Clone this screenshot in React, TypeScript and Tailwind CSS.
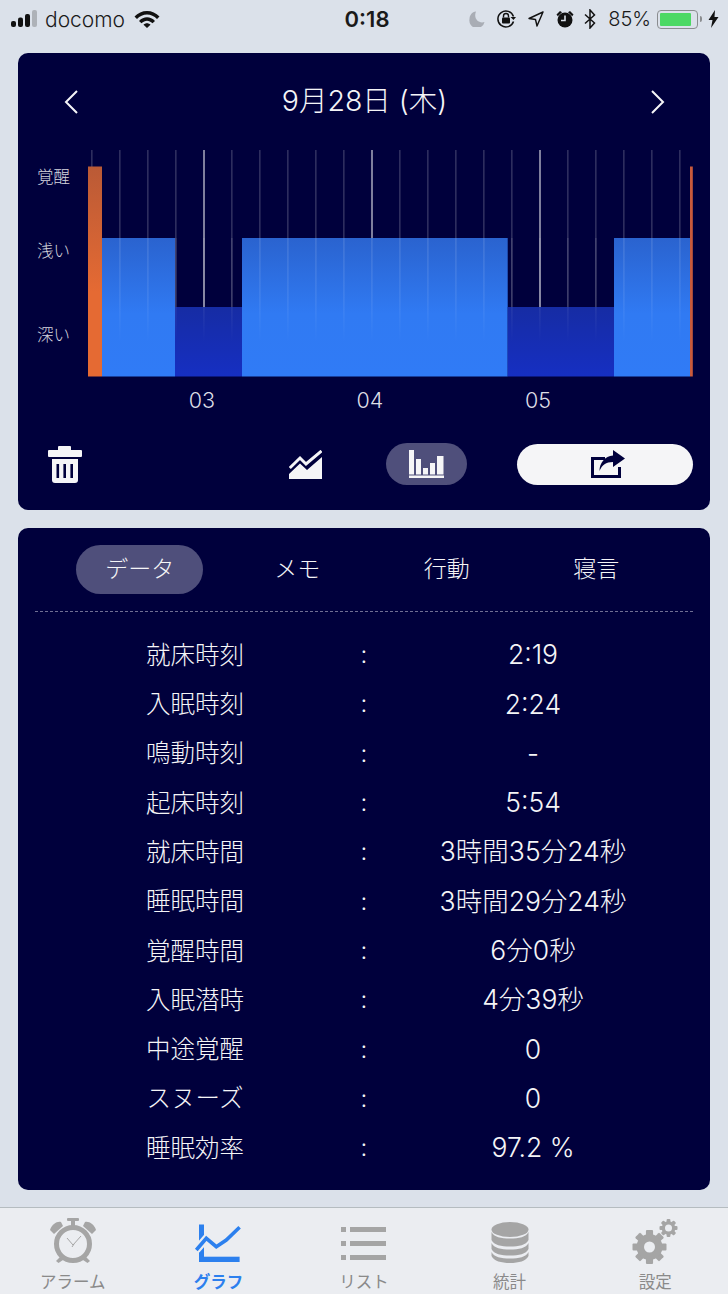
const rows = [
  ["就床時刻", "2:19"],
  ["入眠時刻", "2:24"],
  ["鳴動時刻", "-"],
  ["起床時刻", "5:54"],
  ["就床時間", "3時間35分24秒"],
  ["睡眠時間", "3時間29分24秒"],
  ["覚醒時間", "6分0秒"],
  ["入眠潜時", "4分39秒"],
  ["中途覚醒", "0"],
  ["スヌーズ", "0"],
  ["睡眠効率", "97.2 %"],
];

const gridLines = Array.from({ length: 22 }, (_, i) => i);

function SleepChart() {
  return (
    <svg width="606" height="228" viewBox="0 0 606 228" className="block">
      <defs>
        <linearGradient id="fade" x1="0" y1="88" x2="0" y2="192" gradientUnits="userSpaceOnUse">
          <stop offset="0" stopColor="#fff" stopOpacity="0.13" />
          <stop offset="0.6" stopColor="#fff" stopOpacity="0.09" />
          <stop offset="1" stopColor="#fff" stopOpacity="0" />
        </linearGradient>
        <linearGradient id="light" x1="0" y1="0" x2="0" y2="1">
          <stop offset="0" stopColor="#2a63cf" />
          <stop offset="0.55" stopColor="#307af3" />
          <stop offset="1" stopColor="#307bf6" />
        </linearGradient>
        <linearGradient id="deep" x1="0" y1="0" x2="0" y2="1">
          <stop offset="0" stopColor="#162ca4" />
          <stop offset="1" stopColor="#162fc2" />
        </linearGradient>
        <linearGradient id="awake" x1="0" y1="0" x2="0" y2="1">
          <stop offset="0" stopColor="#ba5a36" />
          <stop offset="0.6" stopColor="#e56a33" />
          <stop offset="1" stopColor="#e56a33" />
        </linearGradient>
      </defs>
      {gridLines.map((i) => {
        const major = i === 4 || i === 10 || i === 16;
        return (
          <rect
            key={i}
            x={3.2 + i * 28}
            y="0"
            width={major ? 1.6 : 1.3}
            height="180"
            fill="#fff"
            fillOpacity={major ? 0.62 : 0.22}
          />
        );
      })}
      <rect x="0" y="16.5" width="14" height="210" fill="url(#awake)" />
      <rect x="14" y="88" width="73" height="138.5" fill="url(#light)" />
      <rect x="87" y="157" width="67" height="69.5" fill="url(#deep)" />
      <rect x="154" y="88" width="265.7" height="138.5" fill="url(#light)" />
      <rect x="419.7" y="157" width="106.3" height="69.5" fill="url(#deep)" />
      <rect x="526" y="88" width="76" height="138.5" fill="url(#light)" />
      <rect x="602" y="16.5" width="2.8" height="210" fill="#c95a3c" />
      {gridLines.slice(1).map((i) => (
        <rect key={i} x={3.2 + i * 28} y="88" width="1.4" height="104" fill="url(#fade)" />
      ))}
    </svg>
  );
}

function TrashIcon() {
  return (
    <svg width="34" height="37" viewBox="0 0 34 37" fill="#f5f5f7">
      <rect x="10" y="0" width="13" height="5" rx="1" />
      <rect x="0" y="4" width="34" height="7" rx="1" />
      <path d="M4 13h26v21a3 3 0 0 1-3 3H7a3 3 0 0 1-3-3z" />
      <g fill="#00003c">
        <rect x="8.5" y="18" width="2.6" height="14" />
        <rect x="15.4" y="18" width="2.6" height="14" />
        <rect x="22.4" y="18" width="2.6" height="14" />
      </g>
    </svg>
  );
}

function AreaIcon() {
  return (
    <svg width="33" height="29" viewBox="0 0 33 29" fill="#f5f5f7">
      <path d="M0 29V24L11 13.5L18 20L33 7V29z" />
      <path d="M0.8 18L11 8L17 14L32.5 1" fill="none" stroke="#f5f5f7" strokeWidth="3" />
    </svg>
  );
}

function BarsIcon() {
  return (
    <svg width="35" height="28" viewBox="0 0 35 28" fill="#f5f5f7">
      <rect x="0" y="0" width="5" height="24.5" />
      <rect x="7" y="9" width="5" height="15.5" />
      <rect x="14" y="18" width="5" height="6.5" />
      <rect x="21" y="13" width="5" height="11.5" />
      <rect x="28" y="6" width="6.5" height="18.5" />
      <rect x="0" y="25.5" width="35" height="2.5" />
    </svg>
  );
}

function ShareIcon() {
  return (
    <svg width="34" height="28" viewBox="0 0 34 28" fill="#00003c">
      <path d="M14 8.5H1.5V26.5H28.5V17" fill="none" stroke="#00003c" strokeWidth="3" />
      <path d="M22 0L34 8.5L22 17V12C15 12 11 15 8.5 21C8.5 13 14 6 22 5.5z" />
    </svg>
  );
}

function Gear({ cx, cy, r, hole, teeth, fg, bg }: { cx: number; cy: number; r: number; hole: number; teeth: number; fg: string; bg: string }) {
  const w = r * 0.42;
  return (
    <g>
      {Array.from({ length: teeth }, (_, i) => (
        <rect
          key={i}
          x={cx - w / 2}
          y={cy - r}
          width={w}
          height={r}
          rx="1"
          fill={fg}
          transform={`rotate(${(360 / teeth) * i} ${cx} ${cy})`}
        />
      ))}
      <circle cx={cx} cy={cy} r={r * 0.76} fill={fg} />
      <circle cx={cx} cy={cy} r={hole} fill={bg} />
    </g>
  );
}

function AlarmTab() {
  return (
    <svg width="48" height="46" viewBox="0 0 48 46" fill="#a5a5a5">
      <circle cx="24" cy="26" r="16.5" fill="none" stroke="#a5a5a5" strokeWidth="5" />
      <rect x="22" y="2" width="4" height="6" />
      <rect x="18" y="0" width="12" height="3" rx="1" />
      <path d="M1 12C3 6 8 3 12 4L14 8L5 16z" />
      <path d="M47 12C45 6 40 3 36 4L34 8L43 16z" />
      <path d="M12 38L7 43L9.5 45L15.5 41z" />
      <path d="M36 38L41 43L38.5 45L32.5 41z" />
      <path d="M18 20L24 27L32 18" fill="none" stroke="#a5a5a5" strokeWidth="1" />
      <path d="M23 29L25 26" fill="none" stroke="#a5a5a5" strokeWidth="1" />
    </svg>
  );
}

function GraphTab() {
  return (
    <svg width="48" height="46" viewBox="0 0 48 46" fill="#2c80ee">
      <rect x="5" y="6.5" width="5" height="37.5" />
      <rect x="5" y="38.7" width="40.6" height="5.3" />
      <path d="M2.3 32L12.3 20.3L22.3 28.7L32.3 22L45.6 9.3" fill="none" stroke="#ebedf1" strokeWidth="8" />
      <path d="M2.3 32L12.3 20.3L22.3 28.7L32.3 22L45.6 9.3" fill="none" stroke="#2c80ee" strokeWidth="3.6" />
    </svg>
  );
}

function ListTab() {
  return (
    <svg width="48" height="46" viewBox="0 0 48 46" fill="#a5a5a5">
      <rect x="1" y="9" width="5" height="5" />
      <rect x="10" y="9" width="36" height="5" />
      <rect x="1" y="23" width="5" height="5" />
      <rect x="10" y="23" width="36" height="5" />
      <rect x="1" y="37" width="5" height="5" />
      <rect x="10" y="37" width="36" height="5" />
    </svg>
  );
}

function DbTab() {
  return (
    <svg width="48" height="46" viewBox="0 0 48 46" fill="#a5a5a5">
      <ellipse cx="24" cy="11.5" rx="18.5" ry="7.5" />
      <path d="M5.5 14C8 19 15 20.5 24 20.5S40 19 42.5 14V22C40 27 33 28.5 24 28.5S8 27 5.5 22z" />
      <path d="M5.5 25C8 30 15 31.5 24 31.5S40 30 42.5 25V31C40 36 33 37.5 24 37.5S8 36 5.5 31z" />
      <path d="M5.5 34C8 39 15 40.5 24 40.5S40 39 42.5 34V38C40 43 33 45 24 45S8 43 5.5 38z" />
    </svg>
  );
}

function GearTab() {
  return (
    <svg width="48" height="46" viewBox="0 0 48 46">
      <Gear cx={18.5} cy={29} r={17} hole={5.5} teeth={8} fg="#a5a5a5" bg="#ebedf1" />
      <Gear cx={37.5} cy={10} r={9} hole={3.5} teeth={8} fg="#a5a5a5" bg="#ebedf1" />
    </svg>
  );
}

const tabs = [
  { label: "アラーム", icon: <AlarmTab />, active: false },
  { label: "グラフ", icon: <GraphTab />, active: true },
  { label: "リスト", icon: <ListTab />, active: false },
  { label: "統計", icon: <DbTab />, active: false },
  { label: "設定", icon: <GearTab />, active: false },
];

export default function App() {
  return (
    <div className="h-[1294px] w-[728px] overflow-hidden bg-[#dbe1ea] font-[Inter,'Noto_Sans_CJK_JP',sans-serif] flex flex-col">
      {/* Status bar */}
      <div className="h-[53px] shrink-0 flex items-start pt-[7px] text-[#1a1a1a]">
        <div className="flex-1 flex items-center h-[24px] pl-[11px]">
          <svg width="28" height="18" viewBox="0 0 28 18" fill="#111">
            <rect x="0" y="11" width="5" height="6" rx="2" />
            <rect x="7" y="7.5" width="5" height="9.5" rx="2" />
            <rect x="14" y="4" width="5" height="13" rx="2" />
            <rect x="21" y="0" width="5" height="17" rx="2" fill="#aeb2b8" />
          </svg>
          <span className="ml-[6px] text-[21px] font-light leading-none">docomo</span>
          <svg width="26" height="18" viewBox="0 0 26 18" fill="#111" className="ml-[9px]">
            <path d="M0.5 6.5C7 -1 19 -1 25.5 6.5L23 9C17.5 3 8.5 3 3 9z" />
            <path d="M5 11C9.5 6 16.5 6 21 11L18.5 13.2C15 9.8 11 9.8 7.5 13.2z" />
            <path d="M9.5 14.8C11.5 12.8 14.5 12.8 16.5 14.8L13 18z" />
          </svg>
        </div>
        <span className="h-[24px] text-[22px] font-semibold leading-[24px] ml-[4px]">0:18</span>
        <div className="flex-1 flex items-center justify-end h-[24px] pr-[9px]">
          <svg width="16" height="16" viewBox="0 0 16 16" fill="#a9adb5">
            <path d="M7 0.5C3 1 0.5 4.3 0.5 8A7.5 7.5 0 0 0 15.5 11C10 13 4 8 7 0.5z" />
          </svg>
          <svg width="20" height="20" viewBox="0 0 20 20" fill="none" className="ml-[11px]">
            <path d="M17.5 12.5A8 8 0 1 1 17.5 7.5" stroke="#111" strokeWidth="1.5" />
            <path d="M14.5 8H20L17.5 11z" fill="#111" />
            <rect x="6" y="8.5" width="8" height="6" rx="1" fill="#111" />
            <path d="M7.5 8.5V7a2.5 2.5 0 0 1 5 0v1.5" stroke="#111" strokeWidth="1.4" />
          </svg>
          <svg width="16" height="16" viewBox="0 0 16 16" fill="none" className="ml-[12px]">
            <path d="M15 1L1 7.5L7.5 8.5L9 15z" stroke="#111" strokeWidth="1.4" strokeLinejoin="round" />
          </svg>
          <svg width="18" height="18" viewBox="0 0 18 18" fill="#111" className="ml-[12px]">
            <circle cx="9" cy="10" r="7.5" />
            <path d="M0.5 4.5L4 1L6 2.2L1.8 6.2z" />
            <path d="M17.5 4.5L14 1L12 2.2L16.2 6.2z" />
            <path d="M9 5.5V10.5H5" fill="none" stroke="#dbe1ea" strokeWidth="1.6" />
          </svg>
          <svg width="12" height="20" viewBox="0 0 12 20" fill="none" className="ml-[10px]">
            <path d="M1 5.5L10.5 14L6 19V1L10.5 6L1 14.5" stroke="#111" strokeWidth="1.5" />
          </svg>
          <span className="ml-[12px] text-[20px] font-light leading-none">85%</span>
          <div className="ml-[6px] w-[41px] h-[19px] rounded-[4px] border border-[#8b8d90] p-[2px]">
            <div className="h-full w-[31px] rounded-[1px] bg-[#4cd964]" />
          </div>
          <div className="ml-[2px] w-[2px] h-[6px] bg-[#8b8d90] rounded-r-sm" />
          <svg width="11" height="18" viewBox="0 0 11 18" fill="#111" className="ml-[6px]">
            <path d="M7 0L0.5 10H4.5L3 18L10.5 7H6.5z" />
          </svg>
        </div>
      </div>

      {/* Chart card */}
      <div className="mx-[18px] h-[457px] shrink-0 rounded-[10px] bg-[#00003c] text-[#f5f5f7]">
        <div className="h-[97px] flex items-center justify-between pl-[46px] pr-[45px]">
          <svg width="14" height="24" viewBox="0 0 14 24" fill="none" stroke="#f5f5f7" strokeWidth="2">
            <path d="M13 1L2 12L13 23" />
          </svg>
          <span className="text-[28.5px] font-light leading-none">9月28日 (木)</span>
          <svg width="14" height="24" viewBox="0 0 14 24" fill="none" stroke="#f5f5f7" strokeWidth="2">
            <path d="M1 1L12 12L1 23" />
          </svg>
        </div>

        <div className="flex">
          <div className="w-[70px] pl-[19px] flex flex-col text-[16.5px] leading-[20px] text-[#d6d6de] font-light">
            <span className="mt-[17px]">覚醒</span>
            <span className="mt-[54px]">浅い</span>
            <span className="mt-[64px]">深い</span>
          </div>
          <SleepChart />
        </div>

        <div className="flex pl-[100px] mt-[10px] text-[21.5px] leading-[24px] font-light text-[#dedee6]">
          <span className="w-[168px] text-center">03</span>
          <span className="w-[168px] text-center">04</span>
          <span className="w-[168px] text-center">05</span>
        </div>

        {/* Actions */}
        <div className="flex items-center mt-[31px] h-[42px]">
          <div className="ml-[30px]"><TrashIcon /></div>
          <div className="ml-[207px]"><AreaIcon /></div>
          <div className="ml-[64px] w-[81px] h-[42px] rounded-full bg-[#4f4f7b] flex items-center justify-center">
            <BarsIcon />
          </div>
          <div className="ml-[50px] w-[176px] h-[41px] rounded-full bg-[#f5f5f7] flex items-center justify-center pl-[6px]">
            <ShareIcon />
          </div>
        </div>
      </div>

      {/* Data card */}
      <div className="mx-[18px] mt-[18px] h-[662px] shrink-0 rounded-[10px] bg-[#00003c] text-[#f5f5f7]">
        <div className="flex pl-[47px] pt-[17px] text-[23px] font-light">
          {["データ", "メモ", "行動", "寝言"].map((t, i) => (
            <div key={t} className={i === 1 ? "w-[149.5px] ml-[8px] flex justify-center" : "w-[149.5px] flex justify-center"}>
              <span className={i === 0 ? "w-[127px] h-[49px] rounded-full bg-[#4f4f7b] flex items-center justify-center" : "h-[49px] flex items-center justify-center"}>
                {t}
              </span>
            </div>
          ))}
        </div>
        <div className="mx-[17px] mt-[17px] border-t border-dashed border-[#6f6f93]" />
        <div className="pt-[18.5px] px-5 font-light">
          {rows.map(([label, value]) => (
            <div key={label} className="grid grid-cols-[1fr_24px_1fr] h-[49.3px] items-center text-center">
              <span className="text-[24.5px]">{label}</span>
              <span className="text-[24px]">:</span>
              <span className="text-[26.5px]">{value}</span>
            </div>
          ))}
        </div>
      </div>

      {/* Tab bar */}
      <div className="mt-[17px] flex-1 grid grid-cols-5 border-t border-[#b5bcc0] bg-[#ebedf1] pt-[10px]">
        {tabs.map((tab) => (
          <div key={tab.label} className="flex flex-col items-center">
            {tab.icon}
            <span className={`mt-[9px] text-[16.5px] leading-[18px] ${tab.active ? "font-bold text-[#2c80ee]" : "text-[#8a8a8a]"}`}>
              {tab.label}
            </span>
          </div>
        ))}
      </div>
    </div>
  );
}
